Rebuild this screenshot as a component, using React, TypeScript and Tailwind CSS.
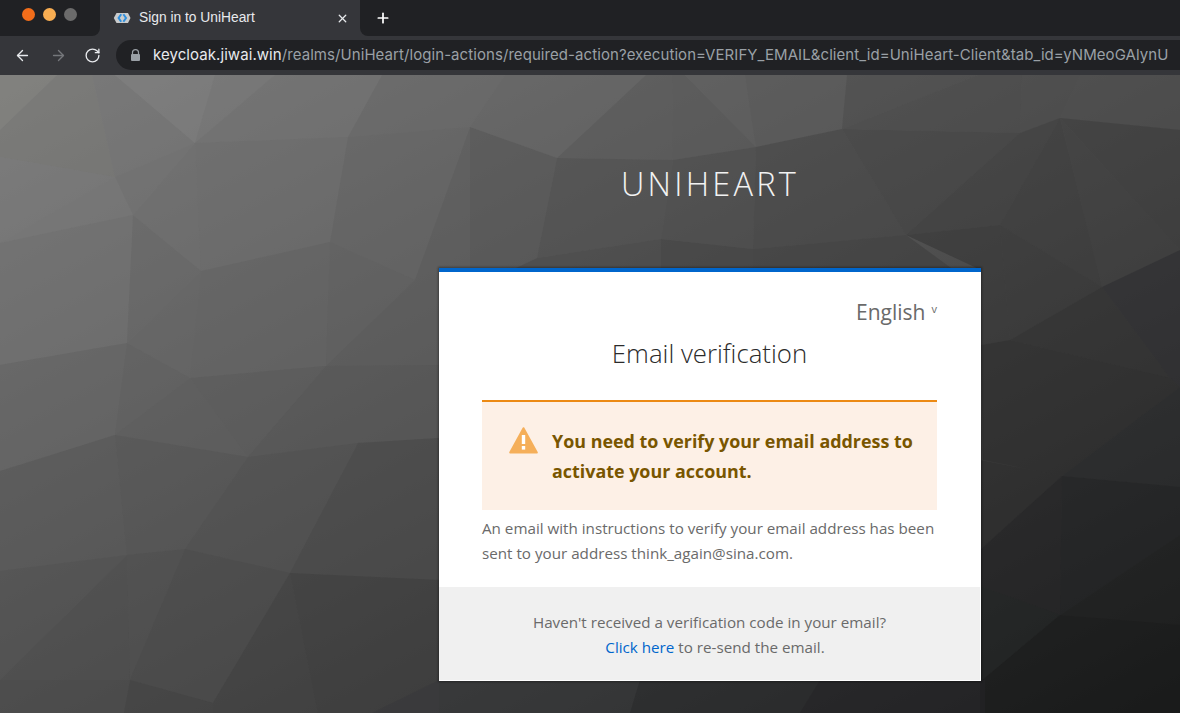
import { ArrowLeft, ArrowRight, Plus, RotateCw, X } from 'lucide-react';

// low-poly backdrop: [points, fill], in page coordinates
const facets: [string, string][] = [
  ['0,75 57,75 0,130', '#7e7e7a'],
  ['57,75 92,75 115,177 0,157 0,130', '#747472'],
  ['92,75 115,75 195,143 115,177', '#727272'],
  ['115,75 215,75 195,143', '#7b7b7b'],
  ['215,75 275,75 195,143', '#747474'],
  ['275,75 382,75 348,137 195,143', '#6f6f6f'],
  ['382,75 505,75 470,127 348,137', '#656565'],
  ['0,157 115,177 0,243', '#767676'],
  ['115,177 133,215 0,243', '#747474'],
  ['115,177 195,143 133,215', '#6e6e6e'],
  ['195,143 201,271 133,215', '#6b6b6b'],
  ['195,143 348,137 330,242 201,271', '#6a6a6a'],
  ['348,137 470,127 415,280 330,242', '#636363'],
  ['0,243 133,215 127,343 0,365', '#6f6f6f'],
  ['133,215 201,271 127,343', '#666666'],
  ['201,271 190,378 127,343', '#646464'],
  ['201,271 330,242 326,366 190,378', '#626262'],
  ['330,242 415,280 326,366', '#606060'],
  ['415,280 470,127 470,290 439,365 326,366', '#5a5a5a'],
  ['0,365 127,343 115,435 0,471', '#646464'],
  ['127,343 190,378 115,435', '#606060'],
  ['190,378 326,366 248,457', '#5a5a5a'],
  ['190,378 248,457 115,435', '#5c5c5c'],
  ['326,366 439,365 439,438 358,443 248,457', '#565656'],
  ['0,471 115,435 127,555 0,571', '#575757'],
  ['115,435 248,457 185,549 127,555', '#545454'],
  ['248,457 358,443 290,573 185,549', '#505050'],
  ['358,443 439,438 439,580 290,573', '#484848'],
  ['0,571 127,555 0,680', '#525252'],
  ['127,555 130,680 0,680', '#4d4d4d'],
  ['127,555 185,549 130,680', '#4f4f4f'],
  ['185,549 290,573 213,703 130,680', '#4a4a4a'],
  ['290,573 318,713 213,713 213,703', '#414141'],
  ['290,573 439,580 439,680 372,713 318,713', '#3e3e3e'],
  ['372,713 439,680 439,713', '#37383a'],
  ['0,680 130,680 124,713 0,713', '#4a4a4a'],
  ['130,680 213,703 213,713 124,713', '#424242'],
  ['505,75 646,75 557,158 470,127', '#636363'],
  ['646,75 672,75 673,160 557,158', '#585858'],
  ['672,75 685,75 756,147 673,160', '#565656'],
  ['685,75 745,75 756,147', '#5c5c5c'],
  ['745,75 847,75 842,129 756,147', '#585858'],
  ['470,127 557,158 537,258 470,290', '#545454'],
  ['557,158 673,160 661,239 537,258', '#4d4d4d'],
  ['673,160 756,147 753,249 661,239', '#4a4a4a'],
  ['756,147 842,129 906,235 753,249', '#454545'],
  ['847,75 978,75 842,129', '#4c4c4c'],
  ['978,75 1022,75 1020,133 842,129', '#484848'],
  ['842,129 1020,133 906,235', '#424242'],
  ['1022,75 1080,75 1060,118 1020,133', '#494949'],
  ['1080,75 1180,75 1180,130 1060,118', '#4b4b4b'],
  ['1020,133 1060,118 1000,225 906,235', '#3d3d3d'],
  ['1060,118 1102,287 1000,225', '#3a3a3a'],
  ['1060,118 1180,130 1180,250', '#3c3c3c'],
  ['1060,118 1180,250 1102,287', '#3e3e3e'],
  ['470,290 537,258 661,239 661,290', '#464646'],
  ['661,239 753,249 753,290 661,290', '#404040'],
  ['753,249 906,235 981,290 753,290', '#3f3f3f'],
  ['906,235 1000,225 1010,340 981,345 981,270', '#383838'],
  ['1000,225 1102,287 1010,340', '#373737'],
  ['1010,340 1102,287 1170,378', '#303030'],
  ['1102,287 1180,250 1180,387 1170,378', '#2c2d2f'],
  ['981,345 1010,340 1170,378 1180,387 1062,476 983,460', '#2c2c2c'],
  ['1180,387 1180,487 1062,476', '#28292b'],
  ['980,460 1062,476 980,550', '#2d2d2d'],
  ['980,550 1062,476 1060,615 980,586', '#232325'],
  ['1062,476 1180,487 1180,535 1060,615', '#212224'],
  ['1060,615 1180,535 1180,625', '#1d1e1e'],
  ['980,586 1060,615 980,682', '#212324'],
  ['1060,615 1180,625 1180,713 980,713 980,682', '#191a1a'],
  ['439,680 640,680 630,713 439,713', '#343537'],
  ['640,680 820,680 800,713 630,713', '#2a2b2d'],
  ['820,680 985,680 985,713 800,713', '#232426'],
];

function Backdrop() {
  return (
    <svg className="absolute inset-0 w-full h-full" viewBox="0 75 1180 638" preserveAspectRatio="none">
      <defs>
        <linearGradient id="wash" gradientUnits="userSpaceOnUse" x1="0" y1="75" x2="541" y2="1067">
          <stop offset="0" stopColor="#888888" />
          <stop offset="1" stopColor="#1c1c1c" />
        </linearGradient>
      </defs>
      <rect x="0" y="75" width="1180" height="638" fill="url(#wash)" />
      {facets.map(([points, fill]) => (
        <polygon key={points} points={points} fill={fill} fillOpacity="0.65" />
      ))}
    </svg>
  );
}

function Favicon() {
  return (
    <svg width="18" height="12" viewBox="0 0 18 12">
      <path d="M3.5 1H15l2.5 5L15 11H3.5L.8 6z" fill="#c9cbcc" />
      <path d="M8.2 2.2 5.6 6l2.6 3.8" fill="none" stroke="#2f8fdc" strokeWidth="2" />
      <path d="M10.4 2.2 13 6l-2.6 3.8" fill="none" stroke="#2f8fdc" strokeWidth="2" />
    </svg>
  );
}

function BrowserChrome() {
  return (
    <div className="h-[75px] shrink-0 bg-[#35363a] font-['Inter',sans-serif]">
      <div className="flex h-9">
        <div className="w-[100px] bg-[#202124] rounded-br-lg flex items-start gap-[8px] pl-[22px] pt-[8px]">
          <span className="w-[13px] h-[13px] rounded-full bg-[#f26d1a]" />
          <span className="w-[13px] h-[13px] rounded-full bg-[#f9ae52]" />
          <span className="w-[13px] h-[13px] rounded-full bg-[#6b6b6b]" />
        </div>
        <div className="w-[260px] flex items-center pl-[13px] pr-[11px] text-[#e8eaed]">
          <Favicon />
          <span className="ml-[8px] flex-1 font-['Liberation_Sans',sans-serif] text-[13.8px]">Sign in to UniHeart</span>
          <X size={13} strokeWidth={2.4} />
        </div>
        <div className="flex-1 bg-[#202124] rounded-bl-lg flex items-center pl-[15px] text-white">
          <Plus size={16} strokeWidth={2.6} />
        </div>
      </div>
      <div className="flex items-center h-[30px] mt-[4px] pl-[14px]">
        <ArrowLeft size={17} strokeWidth={1.9} className="text-[#e8eaed]" />
        <ArrowRight size={17} strokeWidth={1.9} className="ml-[19px] text-[#75777b]" />
        <RotateCw size={17} strokeWidth={1.9} className="ml-[17px] text-[#e8eaed]" />
        <div className="ml-[15px] flex-1 h-[30px] rounded-l-full bg-[#202124] flex items-center pl-[14px] whitespace-nowrap overflow-hidden">
          <svg width="11" height="12" viewBox="0 0 11 12" className="shrink-0">
            <path d="M2.5 5V3.6a3 3 0 0 1 6 0V5" fill="none" stroke="#9aa0a6" strokeWidth="1.2" />
            <rect x="1" y="5" width="9" height="7" rx="1" fill="#9aa0a6" />
          </svg>
          <span className="ml-[12px] text-[15px] tracking-[0.07px] font-['Inter',sans-serif] text-[#9aa0a6]">
            <span className="text-[#e8eaed]">keycloak.jiwai.win</span>/realms/UniHeart/login-actions/required-action?execution=VERIFY_EMAIL&amp;client_id=UniHeart-Client&amp;tab_id=yNMeoGAlynU
          </span>
        </div>
      </div>
    </div>
  );
}

export default function App() {
  return (
    <div className="w-[1180px] h-[713px] flex flex-col overflow-hidden font-['Open_Sans',sans-serif]">
      <BrowserChrome />
      <main className="relative flex-1 flex justify-end pr-[199px]">
        <Backdrop />
        <div className="relative w-[542px]">
          <h1 className="mt-[85px] text-center text-[32.5px] leading-[48px] font-[350] tracking-[3.25px] text-[#f2f2f2]">UNIHEART</h1>
          <div className="mt-[60px] h-[413px] bg-white border-t-[4px] border-[#0066cc] flex flex-col shadow-[0_0_2px_1px_rgba(0,0,0,0.35)]">
            <div className="flex-1 pl-[43px] pr-[44px]">
              <div className="mt-[24px] flex justify-end items-start text-[#6a6a6a] leading-[32px] text-[21px]">
                English
                <span className="ml-[6px] text-[11px] leading-[26px]">v</span>
              </div>
              <h2 className="mt-[7px] text-center text-[25.8px] leading-[36px] font-light text-[#2b2b2b]">Email verification</h2>
              <div className="mt-[29px] h-[110px] bg-[#fdf0e6] border-t-2 border-[#ec8a14] flex pl-[27px] pt-[24px]">
                <svg width="29" height="27" viewBox="0 0 29 27" className="shrink-0 mt-[1px]">
                  <path d="M14.5 1.2 27.8 25.5H1.2z" fill="#f5af5a" stroke="#f5af5a" strokeWidth="2" strokeLinejoin="round" />
                  <rect x="12.8" y="8" width="3.4" height="9" fill="#ffffff" />
                  <rect x="12.8" y="19" width="3.4" height="3.6" fill="#ffffff" />
                </svg>
                <p className="ml-[14px] text-[17.9px] leading-[30px] font-bold text-[#795600]">
                  You need to verify your email address to activate your account.
                </p>
              </div>
              <p className="mt-[6px] text-[15.2px] leading-[25px] text-[#6a6a6a]">
                An email with instructions to verify your email address has been sent to your address think_again@sina.com.
              </p>
            </div>
            <div className="h-[93px] mr-px mb-px bg-[#f0f0f0] pt-[23px] text-center text-[15.2px] leading-[25px] text-[#6a6a6a]">
              <p>Haven't received a verification code in your email?</p>
              <p className="pl-[11px]">
                <a className="text-[#0066cc]">Click here</a> to re-send the email.
              </p>
            </div>
          </div>
        </div>
      </main>
    </div>
  );
}
